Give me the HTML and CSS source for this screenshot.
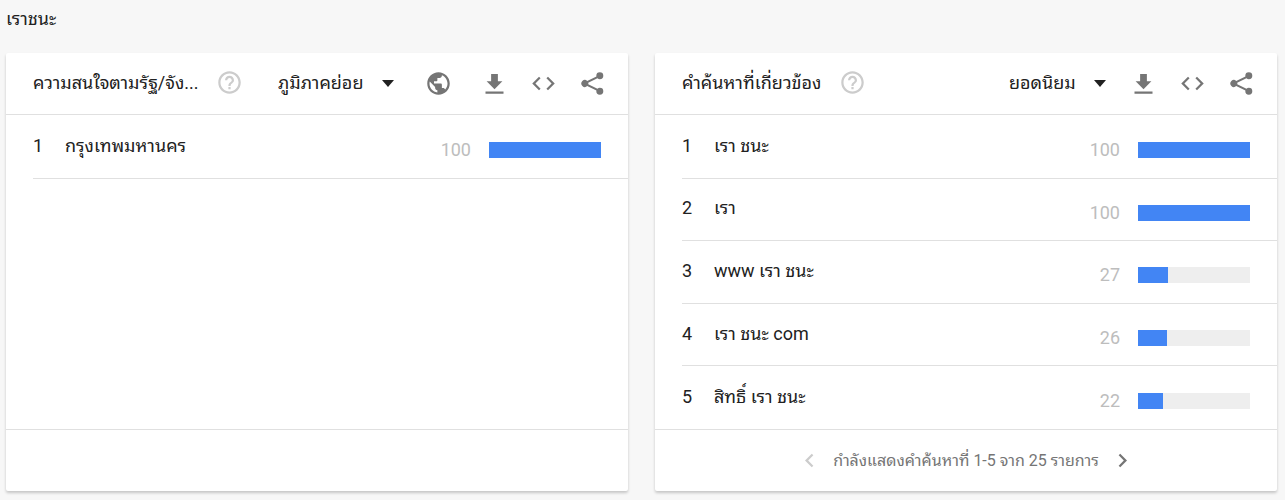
FILE: index.html
```html
<!DOCTYPE html>
<html lang="th">
<head>
  <meta charset="UTF-8">
  <meta name="viewport" content="width=device-width, initial-scale=1.0">
  <title>เราชนะ</title>
  <link rel="stylesheet" href="styles.css">
</head>
<body>
  <!-- shared icons -->
  <svg class="sprite" aria-hidden="true">
    <symbol id="help" viewBox="0 0 24 24"><path d="M11 18h2v-2h-2v2zm1-16C6.48 2 2 6.48 2 12s4.480 10 10 10 10-4.480 10-10S17.520 2 12 2zm0 18c-4.410 0-8-3.590-8-8s3.590-8 8-8 8 3.590 8 8-3.590 8-8 8zm0-14c-2.210 0-4 1.790-4 4h2c0-1.100.9-2 2-2s2 .9 2 2c0 2-3 1.750-3 5h2c0-2.250 3-2.500 3-5 0-2.210-1.790-4-4-4z"/></symbol>
    <symbol id="globe" viewBox="0 0 24 24"><path d="M12 2C6.480 2 2 6.480 2 12s4.480 10 10 10 10-4.480 10-10S17.520 2 12 2zm-1 17.930c-3.950-.49-7-3.850-7-7.930 0-.62.08-1.210.21-1.790L9 15v1c0 1.100.9 2 2 2v1.930zm6.900-2.540c-.26-.81-1-1.390-1.900-1.390h-1v-3c0-.55-.45-1-1-1H8v-2h2c.55 0 1-.45 1-1V7h2c1.100 0 2-.9 2-2v-.41c2.930 1.190 5 4.060 5 7.410 0 2.080-.8 3.970-2.100 5.390z"/></symbol>
    <symbol id="download" viewBox="0 0 24 24"><path d="M19 10h-4V3.500H9V10H5l7 7 7-7zM4 19v2h16v-2H4z"/></symbol>
    <symbol id="code" viewBox="0 0 24 24"><path d="M9.400 16.600L4.800 12l4.600-4.600L8 6l-6 6 6 6 1.400-1.400zm5.200 0l4.600-4.600-4.600-4.600L16 6l6 6-6 6-1.400-1.400z"/></symbol>
    <symbol id="share" viewBox="0 0 24 24"><path d="M18.500 15.800c-.8 0-1.500.3-2.100.8L8.200 12.700c.1-.3.1-.5.1-.7s0-.4-.1-.7l8.200-3.900c.6.500 1.300.8 2.100.8a3.100 3.100 0 1 0-3.100-3.100c0 .3 0 .5.100.7L7.300 9.700A3.100 3.100 0 1 0 7.300 14.300l8.200 3.900c-.1.200-.1.400-.1.700a3.100 3.100 0 1 0 3.100-3.100z"/></symbol>
    <symbol id="prev" viewBox="0 0 24 24"><path d="M15.410 7.410L14 6l-6 6 6 6 1.410-1.410L10.830 12z"/></symbol>
    <symbol id="next" viewBox="0 0 24 24"><path d="M10 6L8.590 7.410 13.170 12l-4.580 4.590L10 18l6-6z"/></symbol>
    <symbol id="arrow" viewBox="0 0 12 8"><path d="M0 0h12L6 7z"/></symbol>
  </svg>

  <h1 class="keyword">เราชนะ</h1>

  <main class="widgets">
    <section class="card">
      <header class="card-header">
        <h2 class="card-title">ความสนใจตามรัฐ/จัง...</h2>
        <button class="icon-btn help" aria-label="ความช่วยเหลือ"><svg><use href="#help"/></svg></button>
        <div class="tools">
          <label class="picker">
            <select aria-label="ภูมิภาคย่อย"><option>ภูมิภาคย่อย</option></select>
            <svg class="arrow"><use href="#arrow"/></svg>
          </label>
          <button class="icon-btn globe" aria-label="แผนที่"><svg><use href="#globe"/></svg></button>
          <button class="icon-btn" aria-label="ดาวน์โหลด"><svg><use href="#download"/></svg></button>
          <button class="icon-btn" aria-label="ฝัง"><svg><use href="#code"/></svg></button>
          <button class="icon-btn" aria-label="แชร์"><svg><use href="#share"/></svg></button>
        </div>
      </header>
      <ol class="rows">
        <li class="row">
          <span class="rank">1</span>
          <span class="term">กรุงเทพมหานคร</span>
          <span class="score">100</span>
          <div class="bar"><div class="fill" style="width: 100%"></div></div>
        </li>
      </ol>
      <footer class="card-footer"></footer>
    </section>

    <section class="card">
      <header class="card-header">
        <h2 class="card-title">คำค้นหาที่เกี่ยวข้อง</h2>
        <button class="icon-btn help" aria-label="ความช่วยเหลือ"><svg><use href="#help"/></svg></button>
        <div class="tools">
          <label class="picker">
            <select aria-label="ยอดนิยม"><option>ยอดนิยม</option></select>
            <svg class="arrow"><use href="#arrow"/></svg>
          </label>
          <button class="icon-btn" aria-label="ดาวน์โหลด"><svg><use href="#download"/></svg></button>
          <button class="icon-btn" aria-label="ฝัง"><svg><use href="#code"/></svg></button>
          <button class="icon-btn" aria-label="แชร์"><svg><use href="#share"/></svg></button>
        </div>
      </header>
      <ol class="rows">
        <li class="row">
          <span class="rank">1</span>
          <span class="term">เรา ชนะ</span>
          <span class="score">100</span>
          <div class="bar"><div class="fill" style="width: 100%"></div></div>
        </li>
        <li class="row">
          <span class="rank">2</span>
          <span class="term">เรา</span>
          <span class="score">100</span>
          <div class="bar"><div class="fill" style="width: 100%"></div></div>
        </li>
        <li class="row">
          <span class="rank">3</span>
          <span class="term">www เรา ชนะ</span>
          <span class="score">27</span>
          <div class="bar"><div class="fill" style="width: 27%"></div></div>
        </li>
        <li class="row">
          <span class="rank">4</span>
          <span class="term">เรา ชนะ com</span>
          <span class="score">26</span>
          <div class="bar"><div class="fill" style="width: 26%"></div></div>
        </li>
        <li class="row">
          <span class="rank">5</span>
          <span class="term">สิทธิ์ เรา ชนะ</span>
          <span class="score">22</span>
          <div class="bar"><div class="fill" style="width: 22%"></div></div>
        </li>
      </ol>
      <footer class="card-footer">
        <button class="page-btn" aria-label="ก่อนหน้า" disabled><svg><use href="#prev"/></svg></button>
        <span>กำลังแสดงคำค้นหาที่ 1-5 จาก 25 รายการ</span>
        <button class="page-btn" aria-label="ถัดไป"><svg><use href="#next"/></svg></button>
      </footer>
    </section>
  </main>
</body>
</html>
```
FILE: styles.css
```css
* {
  box-sizing: border-box;
}

body {
  margin: 0;
  padding: 7px 8px 8px 6px;
  background: #f7f7f7;
  color: #212121;
  font-family: Roboto, "Noto Sans Thai Looped", Loma, Garuda, Waree, "Noto Sans Thai", "Noto Sans", sans-serif;
  font-size: 18px;
  line-height: 24px;
}

button {
  padding: 0;
  border: none;
  background: none;
  color: inherit;
  cursor: pointer;
}

svg {
  display: block;
  fill: currentColor;
}

.sprite {
  position: absolute;
  width: 0;
  height: 0;
}

.keyword {
  margin: 0 0 22px;
  font-size: 18px;
  font-weight: 400;
}

.widgets {
  display: grid;
  grid-template-columns: 1fr 1fr;
  gap: 27px;
}

.card {
  min-width: 0;
  background: #fff;
  border-radius: 2px;
  box-shadow: 0 2px 3px rgba(0, 0, 0, 0.2);
}

.card-header {
  display: flex;
  align-items: center;
  height: 62px;
  padding: 0 22px 0 27px;
  border-bottom: 1px solid #e0e0e0;
}

.card-title {
  margin: 0;
  padding-bottom: 2px;
  font-size: 18px;
  font-weight: 400;
  white-space: nowrap;
}

.icon-btn {
  flex: none;
  color: #757575;
}

.icon-btn svg {
  width: 27px;
  height: 27px;
}

.help {
  margin-left: 18px;
  padding-bottom: 2px;
  color: #ccc;
}

.tools {
  display: flex;
  align-items: center;
  gap: 22px;
  margin-left: auto;
}

.picker {
  display: flex;
  align-items: center;
  gap: 18px;
  margin-right: 2px;
}

.picker select {
  appearance: none;
  padding: 0 0 2px;
  border: none;
  background: none;
  color: inherit;
  font: inherit;
  cursor: pointer;
}

.arrow {
  width: 12px;
  height: 8px;
  pointer-events: none;
}

.globe {
  margin: 0 7px;
}

.rows {
  display: grid;
  grid-template-rows: repeat(5, 1fr);
  height: 315px;
  margin: 0;
  padding: 1px 0 0 27px;
  border-bottom: 1px solid #e0e0e0;
  list-style: none;
}

.row {
  display: flex;
  align-items: center;
  padding-right: 27px;
  border-bottom: 1px solid #e0e0e0;
}

/* the list closes with its own full-width line */
.row:nth-child(5) {
  border-bottom: none;
}

.rank {
  width: 32px;
  padding-bottom: 2px;
}

.term {
  flex: 1;
  padding-bottom: 2px;
}

.score {
  padding-top: 7px;
  margin-right: 18px;
  color: #bdbdbd;
}

.bar {
  width: 112px;
  height: 16px;
  margin-top: 7px;
  background: #eee;
}

.fill {
  height: 100%;
  background: #4285f4;
}

.card-footer {
  display: flex;
  align-items: center;
  justify-content: center;
  gap: 10px;
  height: 61px;
  color: #757575;
  font-size: 16px;
}

.page-btn svg {
  width: 27px;
  height: 27px;
}

.page-btn:disabled {
  color: #ccc;
}
```
